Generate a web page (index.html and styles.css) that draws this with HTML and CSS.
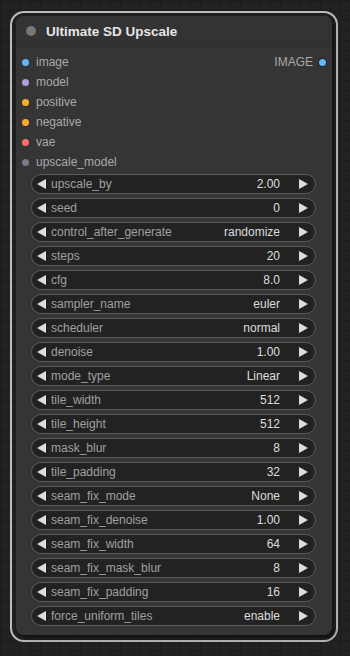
FILE: index.html
```html
<!DOCTYPE html>
<html lang="en">
<head>
  <meta charset="UTF-8">
  <meta name="viewport" content="width=device-width, initial-scale=1.0">
  <title>Ultimate SD Upscale</title>
  <link rel="stylesheet" href="styles.css">
</head>
<body>
  <div class="selection">
    <div class="node">
      <div class="node-title">
        <span class="title-dot"></span>
        <span class="title-text">Ultimate SD Upscale</span>
      </div>

      <!-- inputs / outputs -->
      <div class="slots">
        <div class="slot-row">
          <div class="slot"><span class="dot dot-image"></span>image</div>
          <div class="slot slot-out">IMAGE<span class="dot dot-image dot-out"></span></div>
        </div>
        <div class="slot-row"><div class="slot"><span class="dot dot-model"></span>model</div></div>
        <div class="slot-row"><div class="slot"><span class="dot dot-cond"></span>positive</div></div>
        <div class="slot-row"><div class="slot"><span class="dot dot-cond"></span>negative</div></div>
        <div class="slot-row"><div class="slot"><span class="dot dot-vae"></span>vae</div></div>
        <div class="slot-row"><div class="slot"><span class="dot dot-upscale"></span>upscale_model</div></div>
      </div>

      <!-- widgets -->
      <div class="widgets">
        <div class="widget"><svg class="arrow" viewBox="0 0 9 10"><polygon points="9,0 9,10 0,5"/></svg><span class="w-label">upscale_by</span><span class="w-value">2.00</span><svg class="arrow" viewBox="0 0 9 10"><polygon points="0,0 0,10 9,5"/></svg></div>
        <div class="widget"><svg class="arrow" viewBox="0 0 9 10"><polygon points="9,0 9,10 0,5"/></svg><span class="w-label">seed</span><span class="w-value">0</span><svg class="arrow" viewBox="0 0 9 10"><polygon points="0,0 0,10 9,5"/></svg></div>
        <div class="widget"><svg class="arrow" viewBox="0 0 9 10"><polygon points="9,0 9,10 0,5"/></svg><span class="w-label">control_after_generate</span><span class="w-value">randomize</span><svg class="arrow" viewBox="0 0 9 10"><polygon points="0,0 0,10 9,5"/></svg></div>
        <div class="widget"><svg class="arrow" viewBox="0 0 9 10"><polygon points="9,0 9,10 0,5"/></svg><span class="w-label">steps</span><span class="w-value">20</span><svg class="arrow" viewBox="0 0 9 10"><polygon points="0,0 0,10 9,5"/></svg></div>
        <div class="widget"><svg class="arrow" viewBox="0 0 9 10"><polygon points="9,0 9,10 0,5"/></svg><span class="w-label">cfg</span><span class="w-value">8.0</span><svg class="arrow" viewBox="0 0 9 10"><polygon points="0,0 0,10 9,5"/></svg></div>
        <div class="widget"><svg class="arrow" viewBox="0 0 9 10"><polygon points="9,0 9,10 0,5"/></svg><span class="w-label">sampler_name</span><span class="w-value">euler</span><svg class="arrow" viewBox="0 0 9 10"><polygon points="0,0 0,10 9,5"/></svg></div>
        <div class="widget"><svg class="arrow" viewBox="0 0 9 10"><polygon points="9,0 9,10 0,5"/></svg><span class="w-label">scheduler</span><span class="w-value">normal</span><svg class="arrow" viewBox="0 0 9 10"><polygon points="0,0 0,10 9,5"/></svg></div>
        <div class="widget"><svg class="arrow" viewBox="0 0 9 10"><polygon points="9,0 9,10 0,5"/></svg><span class="w-label">denoise</span><span class="w-value">1.00</span><svg class="arrow" viewBox="0 0 9 10"><polygon points="0,0 0,10 9,5"/></svg></div>
        <div class="widget"><svg class="arrow" viewBox="0 0 9 10"><polygon points="9,0 9,10 0,5"/></svg><span class="w-label">mode_type</span><span class="w-value">Linear</span><svg class="arrow" viewBox="0 0 9 10"><polygon points="0,0 0,10 9,5"/></svg></div>
        <div class="widget"><svg class="arrow" viewBox="0 0 9 10"><polygon points="9,0 9,10 0,5"/></svg><span class="w-label">tile_width</span><span class="w-value">512</span><svg class="arrow" viewBox="0 0 9 10"><polygon points="0,0 0,10 9,5"/></svg></div>
        <div class="widget"><svg class="arrow" viewBox="0 0 9 10"><polygon points="9,0 9,10 0,5"/></svg><span class="w-label">tile_height</span><span class="w-value">512</span><svg class="arrow" viewBox="0 0 9 10"><polygon points="0,0 0,10 9,5"/></svg></div>
        <div class="widget"><svg class="arrow" viewBox="0 0 9 10"><polygon points="9,0 9,10 0,5"/></svg><span class="w-label">mask_blur</span><span class="w-value">8</span><svg class="arrow" viewBox="0 0 9 10"><polygon points="0,0 0,10 9,5"/></svg></div>
        <div class="widget"><svg class="arrow" viewBox="0 0 9 10"><polygon points="9,0 9,10 0,5"/></svg><span class="w-label">tile_padding</span><span class="w-value">32</span><svg class="arrow" viewBox="0 0 9 10"><polygon points="0,0 0,10 9,5"/></svg></div>
        <div class="widget"><svg class="arrow" viewBox="0 0 9 10"><polygon points="9,0 9,10 0,5"/></svg><span class="w-label">seam_fix_mode</span><span class="w-value">None</span><svg class="arrow" viewBox="0 0 9 10"><polygon points="0,0 0,10 9,5"/></svg></div>
        <div class="widget"><svg class="arrow" viewBox="0 0 9 10"><polygon points="9,0 9,10 0,5"/></svg><span class="w-label">seam_fix_denoise</span><span class="w-value">1.00</span><svg class="arrow" viewBox="0 0 9 10"><polygon points="0,0 0,10 9,5"/></svg></div>
        <div class="widget"><svg class="arrow" viewBox="0 0 9 10"><polygon points="9,0 9,10 0,5"/></svg><span class="w-label">seam_fix_width</span><span class="w-value">64</span><svg class="arrow" viewBox="0 0 9 10"><polygon points="0,0 0,10 9,5"/></svg></div>
        <div class="widget"><svg class="arrow" viewBox="0 0 9 10"><polygon points="9,0 9,10 0,5"/></svg><span class="w-label">seam_fix_mask_blur</span><span class="w-value">8</span><svg class="arrow" viewBox="0 0 9 10"><polygon points="0,0 0,10 9,5"/></svg></div>
        <div class="widget"><svg class="arrow" viewBox="0 0 9 10"><polygon points="9,0 9,10 0,5"/></svg><span class="w-label">seam_fix_padding</span><span class="w-value">16</span><svg class="arrow" viewBox="0 0 9 10"><polygon points="0,0 0,10 9,5"/></svg></div>
        <div class="widget"><svg class="arrow" viewBox="0 0 9 10"><polygon points="9,0 9,10 0,5"/></svg><span class="w-label">force_uniform_tiles</span><span class="w-value">enable</span><svg class="arrow" viewBox="0 0 9 10"><polygon points="0,0 0,10 9,5"/></svg></div>
      </div>
    </div>
  </div>
</body>
</html>
```

FILE: styles.css
```css
html, body {
  margin: 0;
  padding: 0;
}

body {
  width: 350px;
  height: 656px;
  overflow: hidden;
  font-family: 'Liberation Sans', Arial, sans-serif;
  background-color: #222;
  background-image:
    linear-gradient(to right, #1c1c1c 1px, transparent 1px),
    linear-gradient(to bottom, #1c1c1c 1px, transparent 1px);
  background-size: 10px 10px;
  padding-top: 11px;
  padding-left: 10px;
  box-sizing: border-box;
}

/* selected node outline */
.selection {
  width: 328px;
  box-sizing: border-box;
  border: 2px solid #bdbdbd;
  border-radius: 14px;
  padding: 3px 4px 5px 4px;
}

.node {
  background-color: #353535;
  border-radius: 8px;
  padding-bottom: 9px;
  box-shadow: 2px 3px 5px rgba(0, 0, 0, 0.55);
}

.node-title {
  height: 30px;
  display: flex;
  align-items: center;
  padding-left: 10px;
  background-color: #333;
  border-radius: 8px 8px 0 0;
  border-bottom: 1px solid #2c2c2c;
}

.title-dot {
  width: 10px;
  height: 10px;
  border-radius: 50%;
  background-color: #777;
  margin-right: 10px;
}

.title-text {
  color: #e6e6e6;
  font-size: 13.5px;
  font-weight: bold;
}

.slots {
  padding-top: 5px;
}

.slot-row {
  height: 20px;
  display: flex;
  justify-content: space-between;
  align-items: center;
}

.slot {
  display: flex;
  align-items: center;
  font-size: 12px;
  color: #aaa;
  padding-left: 6px;
}

.slot-out {
  padding-left: 0;
  padding-right: 6px;
}

.dot {
  width: 7px;
  height: 7px;
  border-radius: 50%;
  margin-right: 7px;
}

.dot-out {
  margin-right: 0;
  margin-left: 6px;
  box-shadow: 0 0 0 1px #1c2630;
}

.dot-image { background-color: #64b5f6; }
.dot-model { background-color: #b39ddb; }
.dot-cond { background-color: #ffa931; }
.dot-vae { background-color: #ff6e6e; }
.dot-upscale { background-color: #7a7a8a; }

.widgets {
  display: flex;
  flex-direction: column;
  gap: 4px;
  padding: 2px 16px 0 15px;
}

.widget {
  height: 20px;
  box-sizing: border-box;
  display: flex;
  align-items: center;
  background-color: #222;
  border: 1px solid #5c5c5c;
  border-radius: 10px;
  padding: 0 7px 0 5px;
  font-size: 12px;
}

.arrow {
  width: 9px;
  height: 10px;
  fill: #ddd;
  flex: none;
}

.w-label {
  color: #a0a0a0;
  margin-left: 5px;
  flex: 1;
}

.w-value {
  color: #ddd;
  margin-right: 19px;
}
```
